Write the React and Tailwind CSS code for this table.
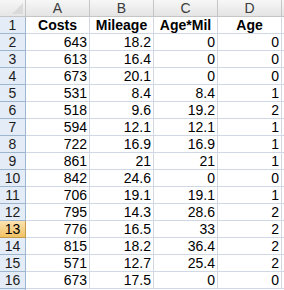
import React from "react";

const rows = [
  [643, 18.2, 0, 0],
  [613, 16.4, 0, 0],
  [673, 20.1, 0, 0],
  [531, 8.4, 8.4, 1],
  [518, 9.6, 19.2, 2],
  [594, 12.1, 12.1, 1],
  [722, 16.9, 16.9, 1],
  [861, 21, 21, 1],
  [842, 24.6, 0, 0],
  [706, 19.1, 19.1, 1],
  [795, 14.3, 28.6, 2],
  [776, 16.5, 33, 2],
  [815, 18.2, 36.4, 2],
  [571, 12.7, 25.4, 2],
  [673, 17.5, 0, 0],
];

function RowHeader({ n, selected }) {
  return (
    <div
      className={
        "w-[26px] shrink-0 h-full border-r border-b flex items-center justify-center text-[14px] leading-[16px] " +
        (selected
          ? "bg-gradient-to-b from-[#fbe3b1] to-[#f2c262] border-[#c29b4a] text-[#000]"
          : "bg-[#e4ecf7] border-[#9eb6ce] text-[#1c1c1c]")
      }
    >
      {n}
    </div>
  );
}

export default function App() {
  return (
    <div
      className="w-[284px] h-[290px] overflow-hidden bg-white text-black"
      style={{ fontFamily: '"Liberation Sans", Arial, sans-serif' }}
    >
      <div className="flex h-[17px]">
        <div className="w-[26px] shrink-0 h-full border-r border-b border-[#c5c5c5] bg-gradient-to-b from-[#f6f6f6] to-[#e6e6e6] relative">
          <svg className="absolute right-[2px] bottom-[2px]" width="11" height="11" viewBox="0 0 11 11">
            <polygon points="11,0 11,11 0,11" fill="#dadada" />
          </svg>
        </div>
        {["A", "B", "C", "D"].map((c) => (
          <div
            key={c}
            className="w-[64px] shrink-0 h-full border-r border-b border-[#c5c5c5] bg-gradient-to-b from-[#f7f7f7] to-[#e4e4e4] flex items-center justify-center text-[14px] leading-[16px] text-[#3b3b3b]"
          >
            {c}
          </div>
        ))}
        <div className="flex-1 h-full border-b border-[#c5c5c5] bg-gradient-to-b from-[#f7f7f7] to-[#e4e4e4]" />
      </div>

      <div className="flex h-[17px]">
        <RowHeader n={1} />
        {["Costs", "Mileage", "Age*Mil", "Age"].map((t) => (
          <div
            key={t}
            className="w-[64px] shrink-0 h-full border-r border-b border-[#d0d7e5] flex items-end justify-center font-bold text-[14px] leading-[16px]"
          >
            {t}
          </div>
        ))}
        <div className="flex-1 h-full border-b border-[#d0d7e5]" />
      </div>

      {rows.map((r, i) => (
        <div key={i} className="flex h-[17px]">
          <RowHeader n={i + 2} selected={i + 2 === 13} />
          {r.map((v, j) => (
            <div
              key={j}
              className="w-[64px] shrink-0 h-full border-r border-b border-[#d0d7e5] flex items-end justify-end pr-[2px] text-[14px] leading-[16px]"
            >
              {v}
            </div>
          ))}
          <div className="flex-1 h-full border-b border-[#d0d7e5]" />
        </div>
      ))}
      <div className="flex h-[17px]">
        <div className="w-[26px] shrink-0 h-full border-r border-[#9eb6ce] bg-[#e4ecf7]" />
      </div>
    </div>
  );
}
